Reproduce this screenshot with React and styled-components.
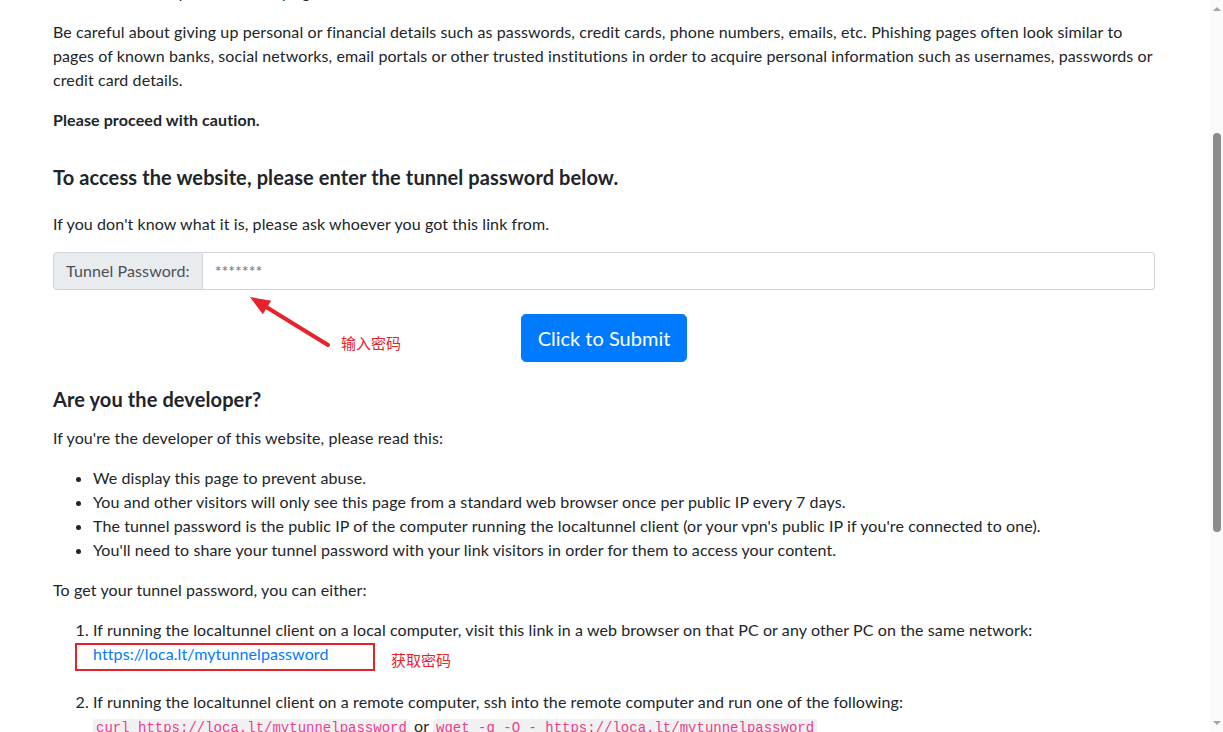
import React from 'react';
import styled, { createGlobalStyle } from 'styled-components';

const GlobalStyle = createGlobalStyle`
  html, body {
    margin: 0;
    padding: 0;
    overflow: hidden;
    background: #fff;
  }

  body {
    font-family: Lato, "Noto Sans", sans-serif;
    font-size: 16px;
    line-height: 1.5;
    letter-spacing: 0.1px;
    color: #212529;
  }
`;

const Frame = styled.div`
  display: flex;
  width: 1223px;
  height: 732px;
  overflow: hidden;
  background: #fff;
`;

const Viewport = styled.div`
  flex: 1;
  overflow: hidden;
`;

const Page = styled.main`
  margin-top: -44px;
  padding: 0 55px 0 53px;
`;

const Paragraph = styled.p`
  margin: 0 0 16px;
`;

const Heading = styled.h5`
  margin: ${({ $top }) => $top}px 0 ${({ $bottom }) => $bottom}px;
  font-size: 20px;
  font-weight: 700;
  line-height: 24px;
`;

const Form = styled.form`
  position: relative;
  display: flex;
  flex-direction: column;
  align-items: center;
  gap: 24px;
`;

const InputGroup = styled.div`
  display: flex;
  align-self: stretch;
  height: 38px;
`;

const Prepend = styled.span`
  display: flex;
  align-items: center;
  padding: 0 12px;
  background: #e9ecef;
  color: #495057;
  border: 1px solid #ced4da;
  border-radius: 4px 0 0 4px;
  white-space: nowrap;
`;

const PasswordInput = styled.input`
  flex: 1;
  min-width: 0;
  padding: 0 12px;
  font: inherit;
  color: #495057;
  border: 1px solid #ced4da;
  border-left: none;
  border-radius: 0 4px 4px 0;
  outline: none;

  &::placeholder {
    color: #6c757d;
  }
`;

const SubmitButton = styled.button`
  height: 48px;
  padding: 0 16px;
  font: inherit;
  font-size: 20px;
  color: #fff;
  background: #007bff;
  border: 1px solid #007bff;
  border-radius: 4.8px;
  cursor: pointer;
`;

const Note = styled.span`
  position: absolute;
  left: ${({ $left }) => $left}px;
  top: ${({ $top }) => $top}px;
  font-family: "Noto Sans CJK SC", sans-serif;
  font-size: 15px;
  line-height: 20px;
  letter-spacing: 0;
  color: #e8222b;
  white-space: nowrap;
`;

const ArrowMark = styled.svg`
  position: absolute;
  left: 187px;
  top: 38px;
`;

const List = styled.ul`
  margin: 0 0 16px;
  padding-left: 40px;
`;

const Steps = styled.ol`
  margin: 0 0 16px;
  padding-left: 40px;
`;

const Step = styled.li`
  margin-bottom: 24px;
`;

const LinkLine = styled.div`
  position: relative;
`;

const Link = styled.a`
  color: #007bff;
  text-decoration: none;
`;

const MarkBox = styled.span`
  position: absolute;
  left: -18px;
  top: 1px;
  width: 300px;
  height: 28px;
  box-sizing: border-box;
  border: 2px solid #e8222b;
`;

const Code = styled.code`
  padding: 1px 3px;
  font-family: "Liberation Mono", monospace;
  font-size: 14px;
  letter-spacing: 0;
  color: #e83e8c;
  background: #f1f1f1;
  border-radius: 3px;
`;

const ScrollTrack = styled.div`
  display: flex;
  flex-direction: column;
  align-items: center;
  width: 13px;
  background: #fafafa;
`;

const ScrollArrow = styled.div`
  width: 0;
  height: 0;
  margin: ${({ $down }) => ($down ? 'auto 0 7px' : '7px 0 0')};
  border-left: 4px solid transparent;
  border-right: 4px solid transparent;
  ${({ $down }) => ($down ? 'border-top' : 'border-bottom')}: 4px solid #a3a3a3;
`;

const ScrollThumb = styled.div`
  width: 8px;
  height: 399px;
  margin-top: 122px;
  background: #8b8b8b;
  border-radius: 4px;
`;

function App() {
  return (
    <Frame>
      <GlobalStyle />
      <Viewport>
        <Page>
          <Paragraph>
            This website is served for free via a localtunnel. We are not affiliated with this website and this is
            just a friendly reminder to always verify that you really trust the website you are now trying to visit.
          </Paragraph>
          <Paragraph>
            Be careful about giving up personal or financial details such as passwords, credit cards, phone numbers,
            emails, etc. Phishing pages often look similar to pages of known banks, social networks, email portals or
            other trusted institutions in order to acquire personal information such as usernames, passwords or credit
            card details.
          </Paragraph>
          <Paragraph>
            <b>Please proceed with caution.</b>
          </Paragraph>

          <Heading $top={33} $bottom={23}>
            To access the website, please enter the tunnel password below.
          </Heading>
          <Paragraph>If you don't know what it is, please ask whoever you got this link from.</Paragraph>

          <Form onSubmit={e => e.preventDefault()}>
            <InputGroup>
              <Prepend>Tunnel Password:</Prepend>
              <PasswordInput type="text" placeholder="*******" />
            </InputGroup>
            <SubmitButton type="submit">Click to Submit</SubmitButton>
            <ArrowMark width="95" height="60" viewBox="0 0 95 60">
              <line x1="27" y1="17.5" x2="88" y2="55" stroke="#e8222b" strokeWidth="4" strokeLinecap="round" />
              <polygon points="10,7 22.8,24.3 31.2,10.7" fill="#e8222b" />
            </ArrowMark>
            <Note $left={288} $top={81}>输入密码</Note>
          </Form>

          <Heading $top={25} $bottom={15}>
            Are you the developer?
          </Heading>
          <Paragraph>If you're the developer of this website, please read this:</Paragraph>
          <List>
            <li>We display this page to prevent abuse.</li>
            <li>You and other visitors will only see this page from a standard web browser once per public IP every 7 days.</li>
            <li>
              The tunnel password is the public IP of the computer running the localtunnel client (or your vpn's public
              IP if you're connected to one).
            </li>
            <li>You'll need to share your tunnel password with your link visitors in order for them to access your content.</li>
          </List>
          <Paragraph>To get your tunnel password, you can either:</Paragraph>
          <Steps>
            <Step>
              If running the localtunnel client on a local computer, visit this link in a web browser on that PC or any
              other PC on the same network:
              <LinkLine>
                <Link href="#">https://loca.lt/mytunnelpassword</Link>
                <MarkBox />
                <Note $left={298} $top={8}>获取密码</Note>
              </LinkLine>
            </Step>
            <Step>
              If running the localtunnel client on a remote computer, ssh into the remote computer and run one of the
              following:
              <br />
              <Code>curl https://loca.lt/mytunnelpassword</Code> or{' '}
              <Code>wget -q -O - https://loca.lt/mytunnelpassword</Code>
            </Step>
          </Steps>
        </Page>
      </Viewport>
      <ScrollTrack>
        <ScrollArrow />
        <ScrollThumb />
        <ScrollArrow $down />
      </ScrollTrack>
    </Frame>
  );
}

export default App;
